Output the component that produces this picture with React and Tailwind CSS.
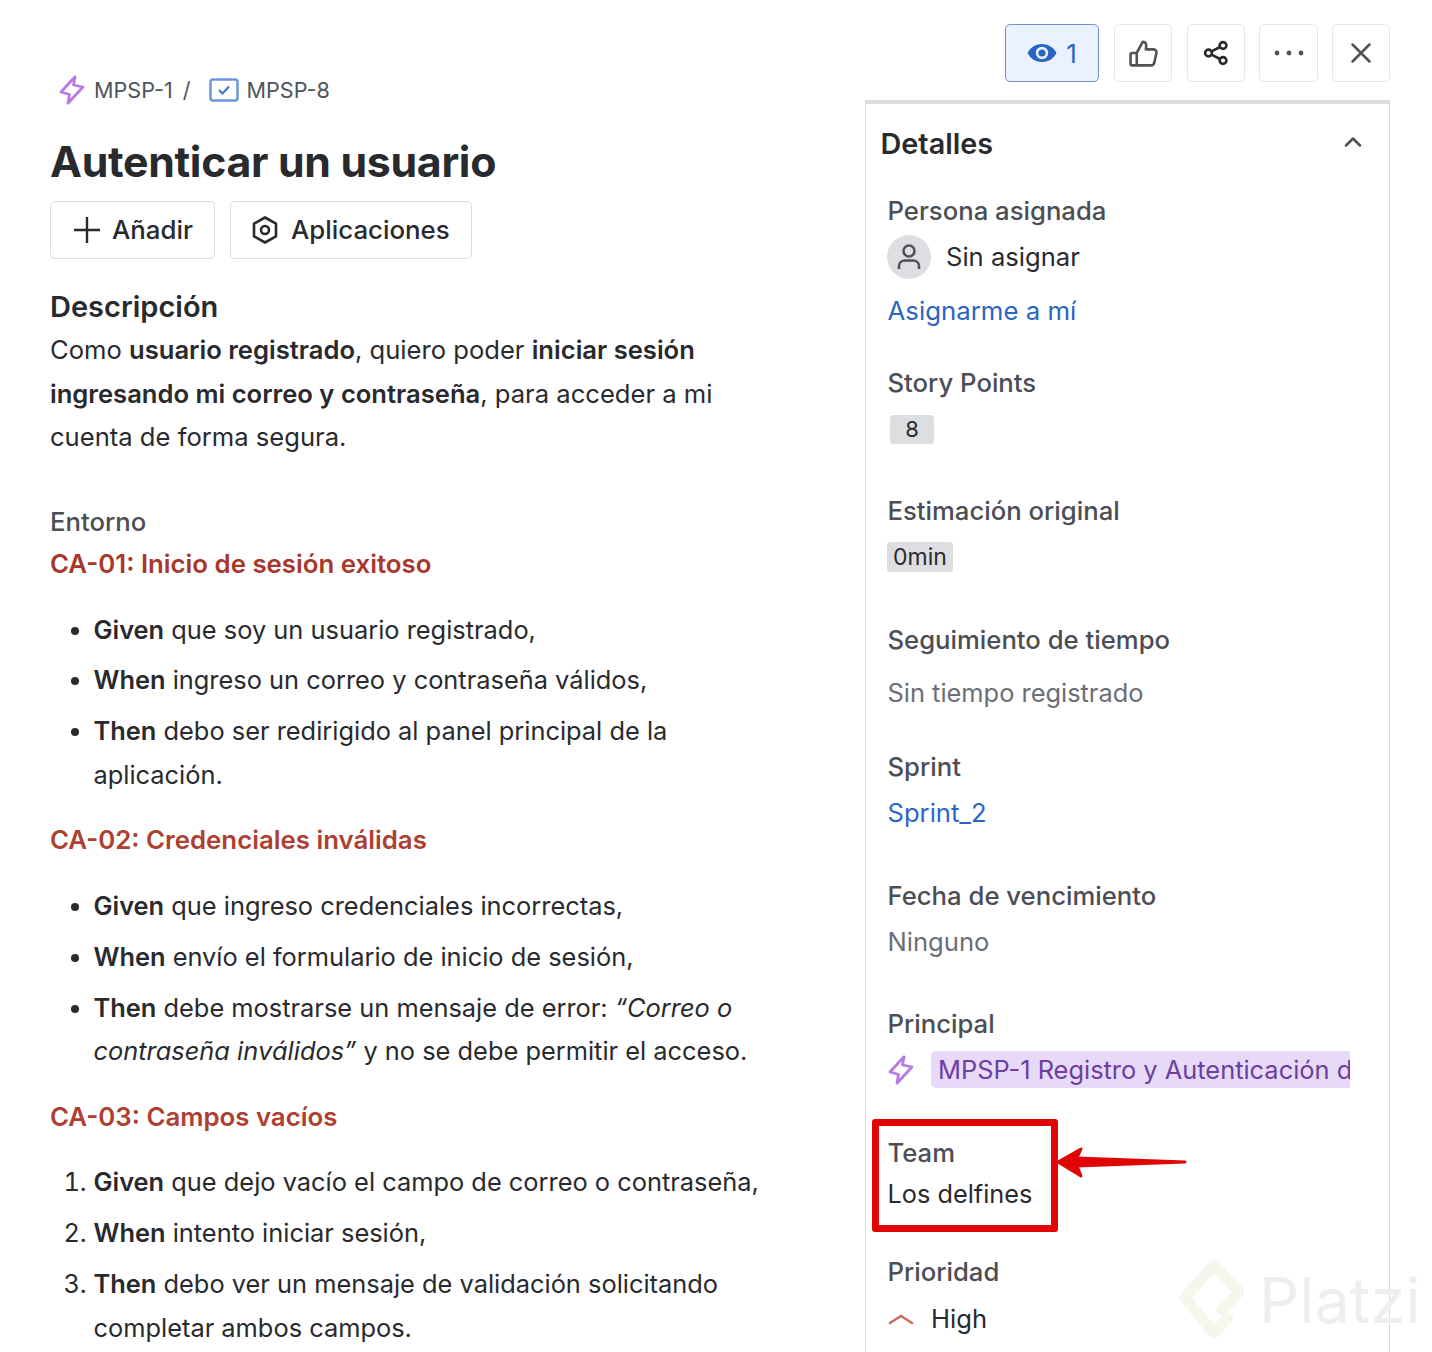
import React from "react";
import { X, ChevronUp } from "lucide-react";

const F = "font-['Inter',sans-serif]";

function Bolt({ className }) {
  return (
    <svg viewBox="0 0 26 30" className={className} fill="none" stroke="#b57be3" strokeWidth="2.8" strokeLinejoin="round" strokeLinecap="round">
      <path d="M16 1.8 L2 17 L10.5 19.5 L9 28.2 L24 12 L14.5 10 Z" />
    </svg>
  );
}

function Label({ children, className = "" }) {
  return <div className={`text-[25.7px] leading-[32px] font-medium text-[#4b4e54] ${className}`}>{children}</div>;
}

function IconBtn({ children, className }) {
  return <div className={`h-[58px] flex items-center justify-center rounded-[5px] border border-[#e6e7e9] bg-white ${className}`}>{children}</div>;
}

function Item({ b, children, className = "" }) {
  return <li className={className}><span className="font-semibold text-[#292a2e]">{b}</span>{children}</li>;
}

export default function App() {
  return (
    <div className={`${F} relative w-[1432px] h-[1352px] overflow-hidden bg-white flex text-[#292a2e] text-[25.6px]`}>
      <main className="w-[865px] shrink-0 pl-[50px] pt-[72px]">
        <div className="flex items-center h-[36px] pl-[9px] text-[21.6px] text-[#50535a]">
          <Bolt className="w-[26px] h-[30px] mr-[9px]" />
          <span>MPSP-1</span>
          <span className="ml-[10px] mr-[19px]">/</span>
          <svg viewBox="0 0 30 24" className="w-[30px] h-[24px] mr-[7px]" fill="none">
            <rect x="1.5" y="1.5" width="27" height="21" rx="2.5" stroke="#6a97dc" strokeWidth="2.5" />
            <path d="M10 12 l3.5 3.5 L20 8.5" stroke="#3f78d4" strokeWidth="2.2" />
          </svg>
          <span>MPSP-8</span>
        </div>
        <h1 className="mt-[26px] text-[42.8px] leading-[56px] font-bold tracking-[-0.3px] text-[#292a2e]">Autenticar un usuario</h1>
        <div className="mt-[11px] flex gap-[15px]">
          <div className="h-[58px] w-[165px] flex items-center pl-[23px] gap-[12px] rounded-[5px] border border-[#dcdde0] font-medium text-[25.8px]">
            <svg viewBox="0 0 26 26" className="w-[26px] h-[26px]" stroke="#292a2e" strokeWidth="2.4"><path d="M13 0 V26 M0 13 H26" /></svg>
            <span>Añadir</span>
          </div>
          <div className="h-[58px] w-[242px] flex items-center pl-[20px] gap-[12px] rounded-[5px] border border-[#dcdde0] font-medium text-[25.8px]">
            <svg viewBox="0 0 28 30" className="w-[28px] h-[30px]" fill="none" stroke="#292a2e" strokeWidth="2.6" strokeLinejoin="round">
              <path d="M14 2.5 L25 8.7 V21.3 L14 27.5 L3 21.3 V8.7 Z" />
              <circle cx="14" cy="15" r="4" />
            </svg>
            <span>Aplicaciones</span>
          </div>
        </div>
        <h2 className="mt-[30px] text-[29px] leading-[36px] font-semibold">Descripción</h2>
        <p className="mt-[3px] w-[700px] leading-[43.5px]">
          Como <b className="font-semibold">usuario registrado</b>, quiero poder <b className="font-semibold">iniciar sesión ingresando mi correo y contraseña</b>, para acceder a mi cuenta de forma segura.
        </p>
        <Label className="mt-[47px]">Entorno</Label>
        <h3 className="mt-[10px] font-semibold leading-[32px] text-[25.8px] text-[#a8382b]">CA-01: Inicio de sesión exitoso</h3>
        <ul className="mt-[28px] list-disc pl-[43.5px] w-[730px] leading-[44px] text-[25.4px]">
          <Item b="Given"> que soy un usuario registrado,</Item>
          <Item className="mt-[6.5px]" b="When"> ingreso un correo y contraseña válidos,</Item>
          <Item className="mt-[6.5px]" b="Then"> debo ser redirigido al panel principal de la aplicación.</Item>
        </ul>
        <h3 className="mt-[27px] font-semibold leading-[32px] text-[25.8px] text-[#ae4032]">CA-02: Credenciales inválidas</h3>
        <ul className="mt-[28px] list-disc pl-[43.5px] w-[730px] leading-[43.5px] text-[25.4px]">
          <Item b="Given"> que ingreso credenciales incorrectas,</Item>
          <Item className="mt-[7.5px]" b="When"> envío el formulario de inicio de sesión,</Item>
          <Item className="mt-[7.5px]" b="Then"> debe mostrarse un mensaje de error: <i>“Correo o contraseña inválidos”</i> y no se debe permitir el acceso.</Item>
        </ul>
        <h3 className="mt-[28px] font-semibold leading-[32px] text-[25.8px] text-[#ae4032]">CA-03: Campos vacíos</h3>
        <ol className="mt-[27px] list-decimal pl-[43.5px] w-[730px] leading-[44px] text-[25.4px]">
          <Item b="Given"> que dejo vacío el campo de correo o contraseña,</Item>
          <Item className="mt-[7px]" b="When"> intento iniciar sesión,</Item>
          <Item className="mt-[7px]" b="Then"> debo ver un mensaje de validación solicitando completar ambos campos.</Item>
        </ol>
      </main>

      <aside className="w-[525px] shrink-0 flex flex-col">
        <div className="pt-[24px] h-[100px] flex justify-end">
          <div className="h-[58px] w-[94px] flex items-center justify-center gap-[9px] rounded-[5px] border border-[#6f93c9] bg-[#e9f2fe] text-[#2c64c6]">
            <svg viewBox="0 0 30 20" className="w-[30px] h-[20px]">
              <path fill="#2c64c6" d="M15 1 C8 1 3 5 0.5 10 C3 15 8 19 15 19 C22 19 27 15 29.5 10 C27 5 22 1 15 1 Z" />
              <circle cx="15" cy="10" r="6.2" fill="#e9f2fe" />
              <circle cx="15" cy="10" r="3.6" fill="#2c64c6" />
            </svg>
            <span className="text-[26px]">1</span>
          </div>
          <IconBtn className="w-[58px] ml-[15px]">
            <svg viewBox="0 0 28 26" className="w-[29px] h-[27px]" fill="none" stroke="#505258" strokeWidth="2.5" strokeLinejoin="round">
              <path d="M7.5 12.5 H3 C2 12.5 1.5 13 1.5 14 V23 C1.5 24 2 24.5 3 24.5 H21 C23 24.5 24 23.8 24.4 22 L26.4 13 C26.9 10.8 25.8 9 23.5 9 H16.2 C17 5.5 17 1.8 13.2 1.8 L7.5 12.5 V24.5" />
            </svg>
          </IconBtn>
          <IconBtn className="w-[58px] ml-[15px]">
            <svg viewBox="0 0 26 26" className="w-[26px] h-[26px]" fill="none" stroke="#292a2e" strokeWidth="2.6">
              <circle cx="20" cy="5.5" r="3.4" /><circle cx="20" cy="20.5" r="3.4" /><circle cx="5.5" cy="13" r="3.4" />
              <path d="M8.6 11.4 L17 7 M8.6 14.6 L17 19" />
            </svg>
          </IconBtn>
          <IconBtn className="w-[59px] ml-[14px]">
            <svg viewBox="0 0 30 6" className="w-[30px] h-[6px]" fill="#505258">
              <circle cx="3" cy="3" r="2.4" /><circle cx="15" cy="3" r="2.4" /><circle cx="27" cy="3" r="2.4" />
            </svg>
          </IconBtn>
          <IconBtn className="w-[58px] ml-[14px]"><X size={34} strokeWidth={1.8} color="#505258" /></IconBtn>
        </div>
        <div className="w-[525px] flex-1 border-t-[4px] border-x border-[#dcdde0] border-x-[#d8d9dc] pl-[21.5px] pr-[39px] text-[25.6px]">
          <div className="flex items-center h-[32px] mt-[24px] -ml-[7px]">
            <span className="text-[28.8px] font-semibold text-[#292a2e]">Detalles</span>
            <ChevronUp size={28} strokeWidth={2.2} color="#505258" className="-mt-[4px] ml-auto -mr-[17px]" />
          </div>
          <Label className="mt-[35px]">Persona asignada</Label>
          <div className="mt-[8px] flex items-center h-[44px] -ml-[0.5px]">
            <div className="w-[44px] h-[44px] rounded-full bg-[#dddee1] flex items-center justify-center">
              <svg viewBox="0 0 24 28" className="w-[24px] h-[28px]" fill="none" stroke="#505258" strokeWidth="2.6">
                <circle cx="12" cy="8" r="5.5" />
                <path d="M2 26 V23 C2 19.5 5 17.5 8 17.5 H16 C19 17.5 22 19.5 22 23 V26" />
              </svg>
            </div>
            <span className="ml-[15px]">Sin asignar</span>
          </div>
          <div className="mt-[16px] leading-[32px] text-[25.8px] text-[#2c64c6]">Asignarme a mí</div>
          <Label className="mt-[40px]">Story Points</Label>
          <div className="mt-[16px] ml-[2.5px] w-[44px] h-[29px] rounded-[3px] bg-[#dddee1] flex items-center justify-center text-[22px]">8</div>
          <Label className="mt-[51px]">Estimación original</Label>
          <div className="mt-[15px] -ml-[0.5px] w-[66px] h-[30px] rounded-[3px] bg-[#dddee1] flex items-center justify-center text-[23px]">0min</div>
          <Label className="mt-[52px]">Seguimiento de tiempo</Label>
          <div className="mt-[21px] leading-[32px] text-[25.4px] text-[#6b6e76]">Sin tiempo registrado</div>
          <Label className="mt-[42px]">Sprint</Label>
          <div className="mt-[14px] leading-[32px] text-[#2c64c6]">Sprint_2</div>
          <Label className="mt-[51px]">Fecha de vencimiento</Label>
          <div className="mt-[14px] leading-[32px] text-[#6b6e76]">Ninguno</div>
          <Label className="mt-[50px]">Principal</Label>
          <div className="mt-[11px] ml-[0.5px] flex items-center">
            <Bolt className="w-[26px] h-[30px]" />
            <div className="ml-[17px] h-[37px] w-[419px] overflow-hidden whitespace-nowrap rounded-l-[5px] bg-[#e8d9f8] pl-[7px] leading-[37px] text-[25.4px] text-[#6a3f9e]">
              MPSP-1 Registro y Autenticación de Usuarios
            </div>
          </div>
          <Label className="mt-[49px]">Team</Label>
          <div className="mt-[9px] leading-[32px] text-[25.3px]">Los delfines</div>
          <Label className="mt-[46px]">Prioridad</Label>
          <div className="mt-[15px] ml-[0.5px] flex items-center leading-[32px]">
            <svg viewBox="0 0 26 12" className="w-[26px] h-[12px]" fill="none" stroke="#cf6a5c" strokeWidth="2.6" strokeLinecap="round">
              <path d="M2 10 L13 3 L24 10" />
            </svg>
            <span className="ml-[17px]">High</span>
          </div>
        </div>
      </aside>

      {/* annotation over the screenshot */}
      <div className="absolute left-[872px] top-[1119px] w-[186px] h-[113px] rounded-[3px] border-[7px] border-[#e00606]" />
      <svg className="absolute left-[1055px] top-[1142px] w-[132px] h-[40px]" viewBox="0 0 132 40">
        <path fill="#e00606" stroke="#e00606" strokeWidth="3" strokeLinejoin="round" d="M3 20 L26 7 L22 16 L130 20 L22 24 L26 34 Z" />
      </svg>

      {/* Platzi watermark */}
      <div className="absolute left-[1178px] top-[1258px] flex items-start pointer-events-none">
        <svg viewBox="0 0 70 82" className="w-[70px] h-[82px]" fill="none" stroke="#f4f8ec" strokeWidth="11" strokeLinejoin="round" strokeLinecap="round">
          <path d="M44 52 L61 34 L36 7 L7 40 L36 75 L50 60" />
        </svg>
        <span className="ml-[11px] mt-[3px] text-[63px] leading-[78px] font-normal text-[#eeeeee]">Platzi</span>
      </div>
    </div>
  );
}
